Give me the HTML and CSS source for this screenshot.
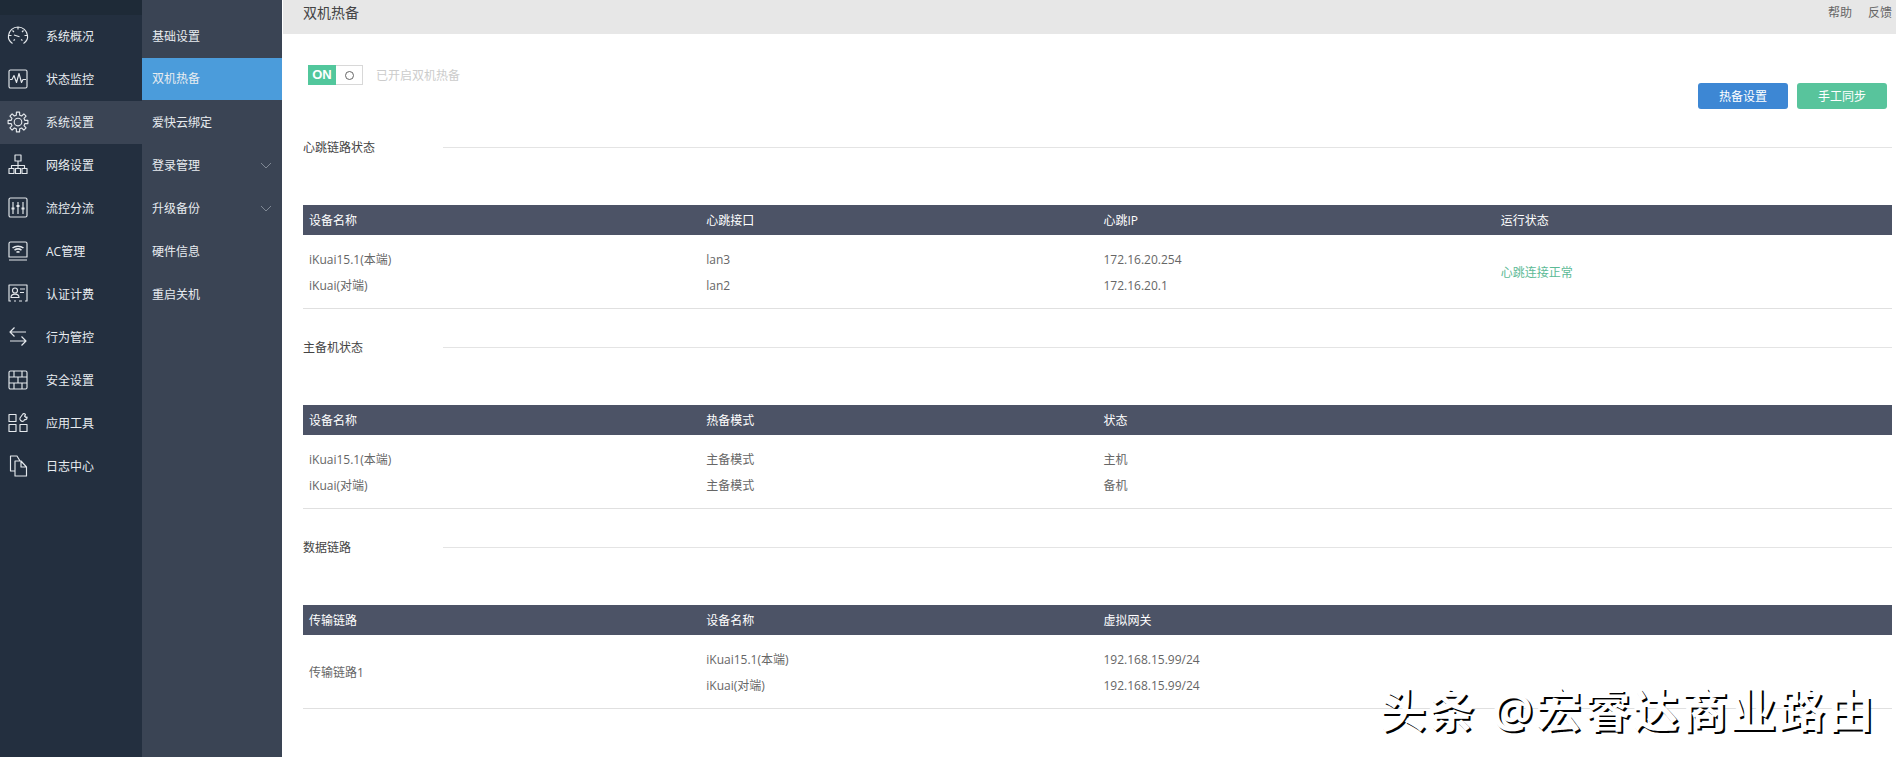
FILE: index.html
```html
<!DOCTYPE html>
<html lang="zh-CN">
<head>
<meta charset="utf-8">
<title>双机热备</title>
<link rel="stylesheet" href="styles.css">
</head>
<body>
<div class="app">
  <nav class="nav">
    <div class="nav-top"></div>
    <a class="nav-item"><svg class="ico" viewBox="0 0 20 20"><path d="M4.500 17.500C1.500 15.500 0 12.500.5 9.500 1.200 4.500 5 1 10 1s8.800 3.500 9.500 8.500c.5 3-1 6-4 8M3.500 9.500H.8M19.200 9.500H16.500M4.500 4.500l1.500 1.500M15.500 4.500 14 6M10 1v2.500M5.500 14.500l1.500-1M14.500 14.500l-1.500-1M6 9l5.500 1.800"/></svg><span>系统概况</span></a>
    <a class="nav-item"><svg class="ico" viewBox="0 0 20 20"><rect x="1" y="1" width="18" height="18" rx="1.500"/><path d="M2 10.500h2l2-4 2.500 7 2.500-9 2.500 9 1.500-3H18"/></svg><span>状态监控</span></a>
    <a class="nav-item on"><svg class="ico" viewBox="0 0 20 20"><path d="M16.790 8.310 19.880 8.440V11.560L16.790 11.690 16 13.610 18.090 15.880 15.880 18.090 13.610 16 11.690 16.790 11.560 19.880H8.440L8.310 16.790 6.390 16 4.120 18.090 1.910 15.880 4 13.610 3.210 11.690.12 11.560V8.440L3.210 8.310 4 6.390 1.910 4.120 4.120 1.910 6.390 4 8.310 3.210 8.440.12H11.560L11.690 3.210 13.610 4 15.880 1.910 18.090 4.120 16 6.390Z"/><circle cx="10" cy="10" r="3.800"/></svg><span>系统设置</span></a>
    <a class="nav-item"><svg class="ico" viewBox="0 0 20 20"><rect x="7" y="0" width="6" height="6"/><rect x="1" y="13.500" width="5" height="5"/><rect x="7.500" y="13.500" width="5" height="5"/><rect x="14" y="13.500" width="5" height="5"/><path d="M10 6v4.500M3.500 13.500v-3h13v3M10 10.500v3"/></svg><span>网络设置</span></a>
    <a class="nav-item"><svg class="ico" viewBox="0 0 20 20"><rect x="1" y="0" width="18" height="19" rx="1.500"/><path d="M5 4v12M10 4v12M15 4v12"/><path class="fill" d="M3.500 9.500h3v2h-3zM8.500 7h3v2h-3zM13.500 9.500h3v2h-3z"/></svg><span>流控分流</span></a>
    <a class="nav-item"><svg class="ico" viewBox="0 0 20 20"><path d="M2.500 1h15A1.500 1.500 0 0 1 19 2.500V16H1V2.500A1.500 1.500 0 0 1 2.500 1zM1 19h18"/><path class="thick" d="M4.500 7c3-2.500 8-2.500 11 0M6.500 9.200c2-1.500 5-1.500 7 0M8.500 11.300c.8-.6 2.200-.6 3 0"/></svg><span>AC管理</span></a>
    <a class="nav-item"><svg class="ico" viewBox="0 0 20 20"><path d="M3 17H1V1h18v16h-2M6 17h2M11 17h3M12 5h5M12 8.500h4"/><circle cx="7" cy="6.500" r="2.500"/><path d="M3 13.500c0-4.500 8-4.500 8 0z"/></svg><span>认证计费</span></a>
    <a class="nav-item"><svg class="ico" viewBox="0 0 20 20"><path d="M18 5H2M6.500.5 2 5l4.500 4.500M2 14h16M13.500 9.500 18 14l-4.500 4.500"/></svg><span>行为管控</span></a>
    <a class="nav-item"><svg class="ico" viewBox="0 0 20 20"><rect x="1" y="1" width="18" height="18" rx="1.500"/><path d="M1 7h18M1 13h18M6 1v6M14 1v6M10 7v6M6 13v6M14 13v6"/></svg><span>安全设置</span></a>
    <a class="nav-item"><svg class="ico" viewBox="0 0 20 20"><rect x="1" y="1.500" width="7" height="7"/><rect x="1" y="11.500" width="7" height="7"/><rect x="12" y="11.500" width="7" height="7"/><path d="M12 5 14.500 1.500c.8-1.300 2.500-1 3 .3l-1 1.200 1.500 1.500 1-.5c.5 1.500-.8 3-2.300 2.500l-1 1.300c-1 1-2 .7-3-.3-.8-.8-1.200-1.500-.7-2.500z"/></svg><span>应用工具</span></a>
    <a class="nav-item"><svg class="ico" viewBox="0 0 20 20"><path d="M7 15H2.500V0H9l3 5M7 5h6l5.500 6v9H7zM13 5v6h5.500"/></svg><span>日志中心</span></a>
  </nav>
  <aside class="sub">
    <div class="sub-top"></div>
    <a class="sub-item">基础设置</a>
    <a class="sub-item on">双机热备</a>
    <a class="sub-item">爱快云绑定</a>
    <a class="sub-item">登录管理<svg class="chev" viewBox="0 0 12 7"><path d="M1 1l5 5 5-5"/></svg></a>
    <a class="sub-item">升级备份<svg class="chev" viewBox="0 0 12 7"><path d="M1 1l5 5 5-5"/></svg></a>
    <a class="sub-item">硬件信息</a>
    <a class="sub-item">重启关机</a>
  </aside>
  <main class="main">
    <header class="head">
      <h1 class="head-title">双机热备</h1>
      <div class="head-links"><a>帮助</a><a>反馈</a></div>
    </header>
    <div class="content">
      <div class="toolbar">
        <div class="toggle-row">
          <div class="toggle"><span class="toggle-on">ON</span><span class="toggle-off"><i class="knob"></i></span></div>
          <span class="toggle-text">已开启双机热备</span>
        </div>
        <div class="btns"><button class="btn blue">热备设置</button><button class="btn green">手工同步</button></div>
      </div>

      <section class="sec">
        <div class="sec-title"><span>心跳链路状态</span></div>
        <div class="tbl">
          <div class="tr th"><div>设备名称</div><div>心跳接口</div><div>心跳IP</div><div>运行状态</div></div>
          <div class="tr tb">
            <div><p>iKuai15.1(本端)</p><p>iKuai(对端)</p></div>
            <div><p>lan3</p><p>lan2</p></div>
            <div><p>172.16.20.254</p><p>172.16.20.1</p></div>
            <div class="status">心跳连接正常</div>
          </div>
        </div>
      </section>

      <section class="sec">
        <div class="sec-title"><span>主备机状态</span></div>
        <div class="tbl">
          <div class="tr th"><div>设备名称</div><div>热备模式</div><div>状态</div><div></div></div>
          <div class="tr tb">
            <div><p>iKuai15.1(本端)</p><p>iKuai(对端)</p></div>
            <div><p>主备模式</p><p>主备模式</p></div>
            <div><p>主机</p><p>备机</p></div>
            <div></div>
          </div>
        </div>
      </section>

      <section class="sec">
        <div class="sec-title"><span>数据链路</span></div>
        <div class="tbl">
          <div class="tr th"><div>传输链路</div><div>设备名称</div><div>虚拟网关</div><div></div></div>
          <div class="tr tb">
            <div class="mid">传输链路1</div>
            <div><p>iKuai15.1(本端)</p><p>iKuai(对端)</p></div>
            <div><p>192.168.15.99/24</p><p>192.168.15.99/24</p></div>
            <div></div>
          </div>
        </div>
      </section>
    </div>
  </main>
</div>
<div class="mark">头条 @宏睿达商业路由</div>
</body>
</html>
```
FILE: styles.css
```css
* { box-sizing: border-box; }
html, body { margin: 0; height: 100%; overflow: hidden; }
body {
  background: #fff;
  font: 12px/20px "Open Sans", "Noto Sans CJK SC", "Microsoft YaHei", sans-serif;
  color: #666;
}
.app { display: flex; height: 757px; }

.nav { width: 142px; flex: none; background: #232f3f; color: #e8ecf0; }
.nav-top { height: 15px; background: #1e2a37; }
.nav-item { display: flex; align-items: center; height: 43px; padding-left: 8px; gap: 18px; }
.nav-item.on { background: #3a4454; }
.ico { width: 20px; height: 20px; flex: none; margin-bottom: 2px; fill: none; stroke: #e4e8ec; stroke-width: 1.15; stroke-linejoin: round; overflow: visible; }
.ico .fill { fill: #e4e8ec; stroke: none; }
.ico .thick { stroke-width: 1.5; }

.sub { width: 140px; flex: none; background: #3a4454; color: #e8ecf0; }
.sub-top { height: 15px; }
.sub-item { display: flex; align-items: center; justify-content: space-between; height: 43px; padding: 0 10px; }
.sub-item.on { background: #4b9cdb; height: 42px; margin-bottom: 1px; }
.chev { width: 12px; height: 7px; fill: none; stroke: #7f8894; stroke-width: 1; }

.main { flex: 1; min-width: 0; padding-left: 1px; }
.head { display: flex; justify-content: space-between; height: 34px; padding: 3px 4px 0 20px; background: #e7e7e7; }
.head-title { margin: 0; font-size: 14px; font-weight: 400; line-height: 20px; color: #444; }
.head-links { display: flex; gap: 16px; line-height: 20px; color: #666; }

.content { padding: 0 4px 0 20px; }
.toolbar { display: flex; justify-content: space-between; height: 103px; }
.toggle-row { display: flex; align-items: center; gap: 13px; height: 20px; margin: 31px 0 0 5px; }
.toggle { display: flex; width: 55px; height: 20px; border: 1px solid #d8d8d8; border-left: 0; }
.toggle-on { width: 28px; margin: -1px 0; background: #52c79c; color: #fff; font: 700 13px/20px "Liberation Sans", sans-serif; text-align: center; }
.toggle-off { flex: 1; display: flex; align-items: center; justify-content: center; }
.knob { width: 9px; height: 9px; border: 1px solid #666; border-radius: 50%; }
.toggle-text { padding-top: 2px; color: #ccc; }
.btns { display: flex; gap: 9px; margin: 49px 5px 0 0; height: 26px; }
.btn { width: 90px; height: 26px; padding: 2px 0 0; border: 0; border-radius: 3px; color: #fff; font: inherit; line-height: 24px; }
.btn.blue { background: #3d87d4; }
.btn.green { background: #58c49c; }

.sec { height: 200px; }
.sec-title { display: flex; align-items: center; height: 20px; margin-bottom: 48px; color: #444; }
.sec-title span { width: 140px; flex: none; padding-top: 2px; }
.sec-title::after { content: ""; flex: 1; height: 1px; background: #e4e4e4; }

.tr { display: grid; grid-template-columns: repeat(4, 1fr); }
.tr > div { padding-left: 6px; }
.th { height: 30px; padding-top: 1px; line-height: 30px; background: #4c5366; color: #fff; }
.tb { padding: 12px 0 9px; border-bottom: 1px solid #e0e0e0; }
.tb p { margin: 0; line-height: 26px; }
.tb .status, .tb .mid { display: flex; align-items: center; }
.status { color: #5cba96; }

.mark {
  position: absolute; left: 1380px; top: 681px;
  font-size: 46px; font-weight: 700; line-height: 56px; letter-spacing: 2.6px; white-space: nowrap;
  color: #fff; text-shadow: 2px 2px 0 #000;
}
```
